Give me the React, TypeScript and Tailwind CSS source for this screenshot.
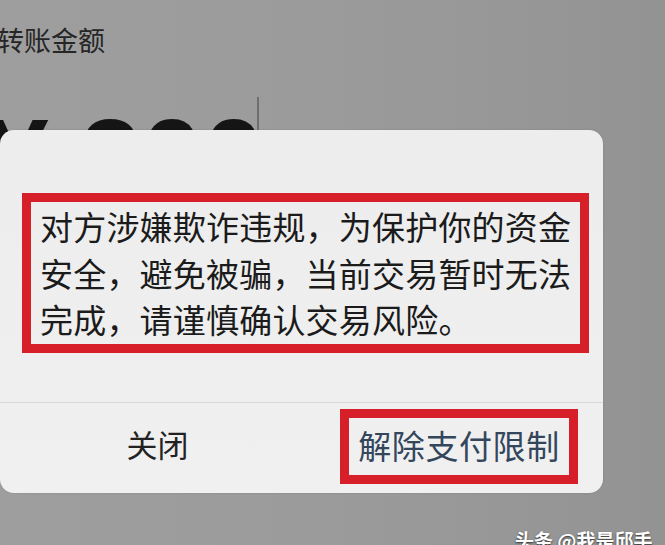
import React from "react";

const cjk = "font-['Noto_Sans_CJK_SC','Noto_Sans',sans-serif]";

export default function App() {
  return (
    <div className="relative w-[665px] h-[545px] overflow-hidden bg-gradient-to-r from-[#9e9e9e] via-[#9b9b9b] to-[#939393]">
      {/* page behind the dialog */}
      <div className="pt-[22px]">
        <div className={`${cjk} ml-[-3px] text-[27px] leading-[36px] text-[#262626]`}>转账金额</div>
        <div className="mt-[46px] flex items-start">
          <div className="ml-[-13px] font-['Liberation_Sans',Arial,sans-serif] font-bold text-[111px] leading-[111px] text-[#151515] whitespace-pre">
            ¥ 200
          </div>
          <div className="ml-[-8px] mt-[-7px] w-[2px] h-[40px] bg-[#6f6f6f]" />
        </div>
      </div>

      {/* dialog */}
      <div className="absolute left-0 top-[130px] w-[603px] h-[363px] rounded-[14px] bg-gradient-to-b from-[#ededed] to-[#f0f0f0] flex flex-col shadow-[0_0_2px_rgba(0,0,0,0.15)]">
        <div className="h-[272px] pt-[63px] pl-[22px]">
          <div className={`${cjk} w-[567px] h-[160px] border-[9px] border-[#d71f2a] pt-[1px] pl-[9px] text-[33px] leading-[46.5px] tracking-[0.2px] text-[#1b1b1b]`}>
            <div>对方涉嫌欺诈违规，为保护你的资金</div>
            <div>安全，避免被骗，当前交易暂时无法</div>
            <div>完成，请谨慎确认交易风险。</div>
          </div>
        </div>
        <div className="h-px bg-[#d9d9d9]" />
        <div className="flex-1 flex">
          <div className={`${cjk} w-[315px] flex items-center justify-center pb-[8px] text-[31px] text-[#222222]`}>
            关闭
          </div>
          <div className="ml-[25px] mt-[6px]">
            <div className={`${cjk} w-[238px] h-[75px] border-[9px] border-[#d71f2a] flex items-center justify-center pb-[2px] text-[33px] tracking-[0.6px] text-[#33465c]`}>
              解除支付限制
            </div>
          </div>
        </div>
      </div>

      {/* watermark */}
      <div className={`${cjk} absolute left-[515px] top-[530px] text-[19px] leading-[19px] font-bold text-white whitespace-nowrap [text-shadow:0_1px_2px_rgba(0,0,0,0.7)]`}>
        头条 @我是邱手
      </div>
    </div>
  );
}
